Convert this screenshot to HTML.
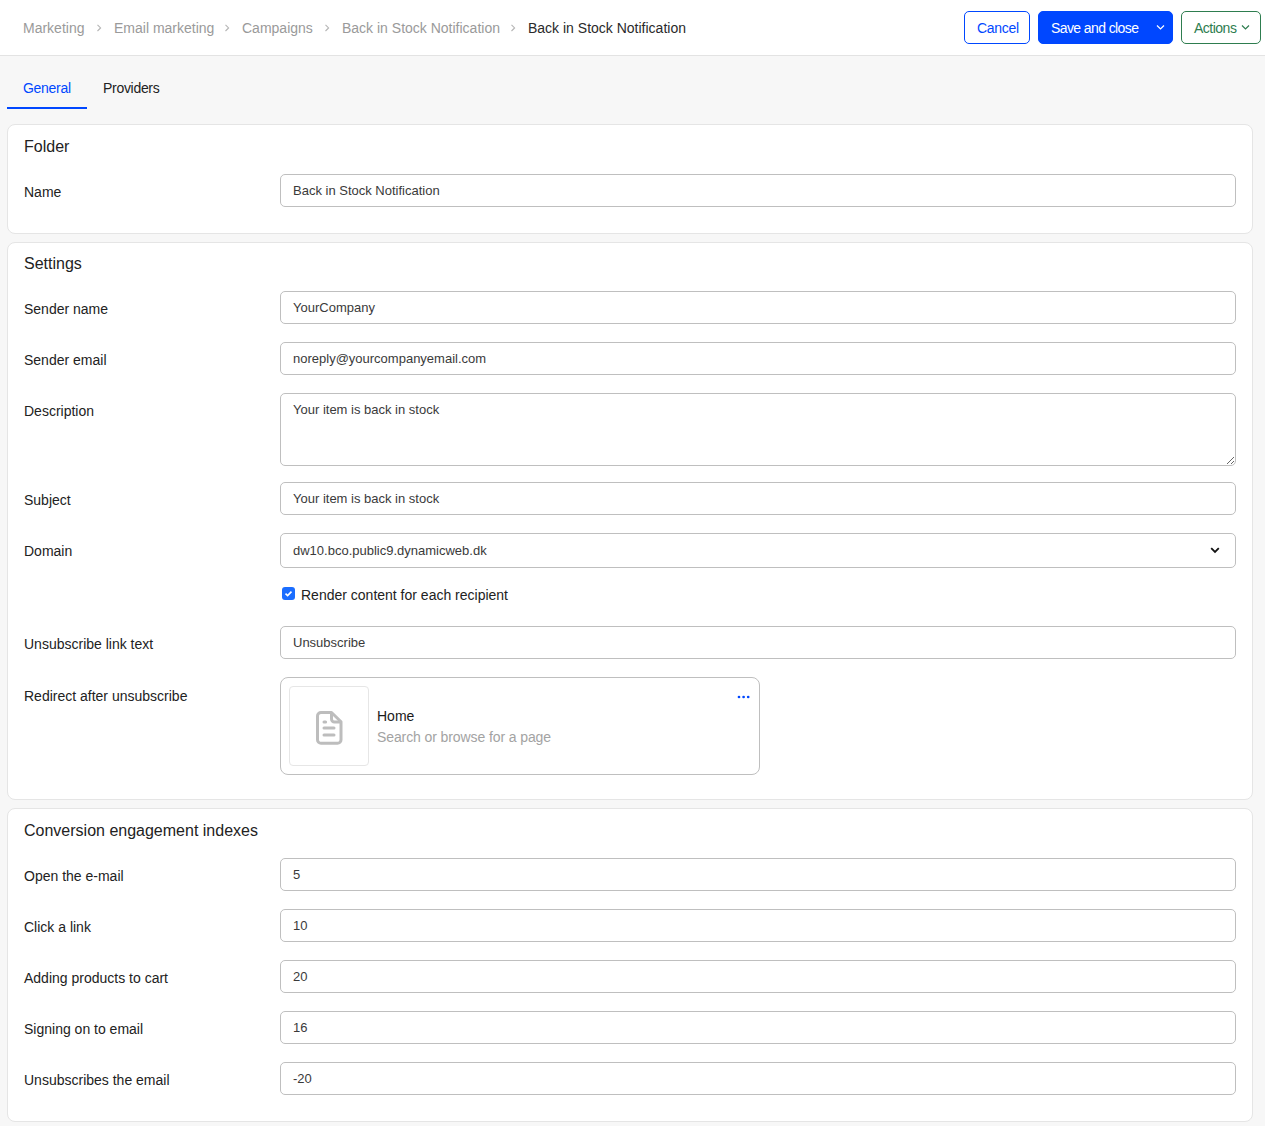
<!DOCTYPE html>
<html><head><meta charset="utf-8">
<style>
*{box-sizing:border-box;margin:0;padding:0}
html,body{width:1265px;height:1126px;overflow:hidden}
body{background:#f7f7f7;font-family:"Liberation Sans",sans-serif;color:#222;position:relative}
.hdr{position:absolute;left:0;top:0;width:1265px;height:56px;background:#fff;border-bottom:1px solid #e3e3e3}
.bc{position:absolute;top:20px;left:23px;font-size:14px;line-height:16px;color:#9a9a9a;white-space:nowrap}
.bc span{position:absolute;top:0}
.chev{position:absolute;top:24px}
.btn{position:absolute;top:11px;height:33px;border-radius:5px;font-size:14px;line-height:31px;white-space:nowrap}
.btn span{position:absolute;top:1px}
.cancel{left:964px;width:66px;border:1px solid #0047ff;color:#0047ff;background:#fff}
.save{left:1038px;width:135px;background:#0047ff;color:#fff;border:1px solid #0047ff}
.actions{left:1181px;width:80px;border:1px solid #2e7d4f;color:#2e7d4f;background:#fff}
.tab{position:absolute;top:80px;font-size:14px;line-height:16px;letter-spacing:-0.3px}
.tabline{position:absolute;left:7px;top:107px;width:80px;height:2px;background:#0047ff}
.card{position:absolute;left:7px;width:1246px;background:#fff;border:1px solid #e5e5e5;border-radius:8px}
.ttl{position:absolute;left:24px;font-size:16px;line-height:18px}
.lbl{position:absolute;left:24px;font-size:14px;line-height:16px}
.inp{position:absolute;left:280px;width:956px;height:33px;border:1px solid #bfbfbf;border-radius:5px;background:#fff;font-size:13px;color:#3a3a3a}
.inp span{position:absolute;left:12px;top:8px;line-height:15px;white-space:nowrap}
</style></head><body>
<div class="hdr">
  <div class="bc">
    <span style="left:0">Marketing</span>
    <span style="left:91px">Email marketing</span>
    <span style="left:219px">Campaigns</span>
    <span style="left:319px">Back in Stock Notification</span>
    <span style="left:505px;color:#2a2a2a">Back in Stock Notification</span>
  </div>
  <svg class="chev" style="left:96px" width="7" height="8" viewBox="0 0 7 8"><path d="M1.5 0.8 L4.6 3.9 L1.5 7" fill="none" stroke="#b5b5b5" stroke-width="1.1"/></svg>
  <svg class="chev" style="left:224px" width="7" height="8" viewBox="0 0 7 8"><path d="M1.5 0.8 L4.6 3.9 L1.5 7" fill="none" stroke="#b5b5b5" stroke-width="1.1"/></svg>
  <svg class="chev" style="left:324px" width="7" height="8" viewBox="0 0 7 8"><path d="M1.5 0.8 L4.6 3.9 L1.5 7" fill="none" stroke="#b5b5b5" stroke-width="1.1"/></svg>
  <svg class="chev" style="left:510px" width="7" height="8" viewBox="0 0 7 8"><path d="M1.5 0.8 L4.6 3.9 L1.5 7" fill="none" stroke="#b5b5b5" stroke-width="1.1"/></svg>
  <div class="btn cancel"><span style="left:12px;letter-spacing:-0.3px">Cancel</span></div>
  <div class="btn save"><span style="left:12px;letter-spacing:-0.6px">Save and close</span>
    <svg style="position:absolute;left:117px;top:12px" width="9" height="7" viewBox="0 0 9 7"><path d="M1 1.5 L4.5 5 L8 1.5" fill="none" stroke="#fff" stroke-width="1.2"/></svg></div>
  <div class="btn actions"><span style="left:12px;letter-spacing:-0.5px">Actions</span>
    <svg style="position:absolute;left:59px;top:12px" width="9" height="7" viewBox="0 0 9 7"><path d="M1 1.5 L4.5 5 L8 1.5" fill="none" stroke="#2e7d4f" stroke-width="1.2"/></svg></div>
</div>
<div class="tab" style="left:23px;color:#0047ff">General</div>
<div class="tab" style="left:103px">Providers</div>
<div class="tabline"></div>

<div class="card" style="top:124px;height:110px"></div>
<div class="ttl" style="top:138px">Folder</div>
<div class="lbl" style="top:184px">Name</div>
<div class="inp" style="top:174px"><span>Back in Stock Notification</span></div>

<div class="card" style="top:242px;height:558px"></div>
<div class="ttl" style="top:255px">Settings</div>
<div class="lbl" style="top:301px">Sender name</div>
<div class="inp" style="top:291px"><span>YourCompany</span></div>
<div class="lbl" style="top:352px">Sender email</div>
<div class="inp" style="top:342px"><span>noreply@yourcompanyemail.com</span></div>
<div class="lbl" style="top:403px">Description</div>
<textarea class="inp" style="top:393px;height:73px;padding:8px 12px;font-family:'Liberation Sans',sans-serif;line-height:15px;resize:vertical;outline:none">Your item is back in stock</textarea>
<div class="lbl" style="top:492px">Subject</div>
<div class="inp" style="top:482px"><span>Your item is back in stock</span></div>
<div class="lbl" style="top:543px">Domain</div>
<div class="inp" style="top:533px;height:35px"><span style="top:9px">dw10.bco.public9.dynamicweb.dk</span>
  <svg style="position:absolute;left:929px;top:13px" width="10" height="7" viewBox="0 0 10 7"><path d="M1.2 1.2 L5 5 L8.8 1.2" fill="none" stroke="#111" stroke-width="1.8"/></svg></div>
<div style="position:absolute;left:282px;top:587px;width:13px;height:13px;border-radius:3px;background:#1a6dff">
  <svg style="position:absolute;left:0;top:0" width="13" height="13" viewBox="0 0 13 13"><path d="M3.5 6.7 L5.6 8.6 L9.5 4.6" fill="none" stroke="#fff" stroke-width="1.6"/></svg></div>
<div class="lbl" style="left:301px;top:587px">Render content for each recipient</div>
<div class="lbl" style="top:636px">Unsubscribe link text</div>
<div class="inp" style="top:626px"><span>Unsubscribe</span></div>
<div class="lbl" style="top:688px">Redirect after unsubscribe</div>
<div style="position:absolute;left:280px;top:677px;width:480px;height:98px;border:1px solid #bfbfbf;border-radius:8px;background:#fff">
  <div style="position:absolute;left:8px;top:8px;width:80px;height:80px;border:1px solid #e6e6e6;border-radius:4px"></div>
  <svg style="position:absolute;left:35px;top:33px" width="28" height="35" viewBox="0 0 28 35">
    <path d="M5 1.5 H15.5 L25 10.8 V28.8 A3.5 3.5 0 0 1 21.5 32.3 H5 A3.5 3.5 0 0 1 1.5 28.8 V5 A3.5 3.5 0 0 1 5 1.5 Z" fill="none" stroke="#bdbdbd" stroke-width="3" stroke-linejoin="round"/>
    <path d="M15.5 1.5 V8 A3 3 0 0 0 18.5 11 H25" fill="none" stroke="#bdbdbd" stroke-width="3" stroke-linejoin="round"/>
    <path d="M8 11 H9.6 M8 17 H18 M8 24 H18" fill="none" stroke="#bdbdbd" stroke-width="3" stroke-linecap="round"/>
  </svg>
  <div style="position:absolute;left:96px;top:30px;font-size:14px;line-height:16px;color:#1a1a1a">Home</div>
  <div style="position:absolute;left:96px;top:51px;font-size:14px;line-height:16px;color:#a3a3a3;letter-spacing:-0.1px">Search or browse for a page</div>
  <svg style="position:absolute;left:455.5px;top:16.5px" width="14" height="4" viewBox="0 0 14 4"><circle cx="2" cy="2" r="1.35" fill="#0047ff"/><circle cx="6.6" cy="2" r="1.35" fill="#0047ff"/><circle cx="11.2" cy="2" r="1.35" fill="#0047ff"/></svg>
</div>

<div class="card" style="top:808px;height:314px"></div>
<div class="ttl" style="top:822px">Conversion engagement indexes</div>
<div class="lbl" style="top:868px">Open the e-mail</div>
<div class="inp" style="top:858px"><span>5</span></div>
<div class="lbl" style="top:919px">Click a link</div>
<div class="inp" style="top:909px"><span>10</span></div>
<div class="lbl" style="top:970px">Adding products to cart</div>
<div class="inp" style="top:960px"><span>20</span></div>
<div class="lbl" style="top:1021px">Signing on to email</div>
<div class="inp" style="top:1011px"><span>16</span></div>
<div class="lbl" style="top:1072px">Unsubscribes the email</div>
<div class="inp" style="top:1062px"><span>-20</span></div>
</body></html>
